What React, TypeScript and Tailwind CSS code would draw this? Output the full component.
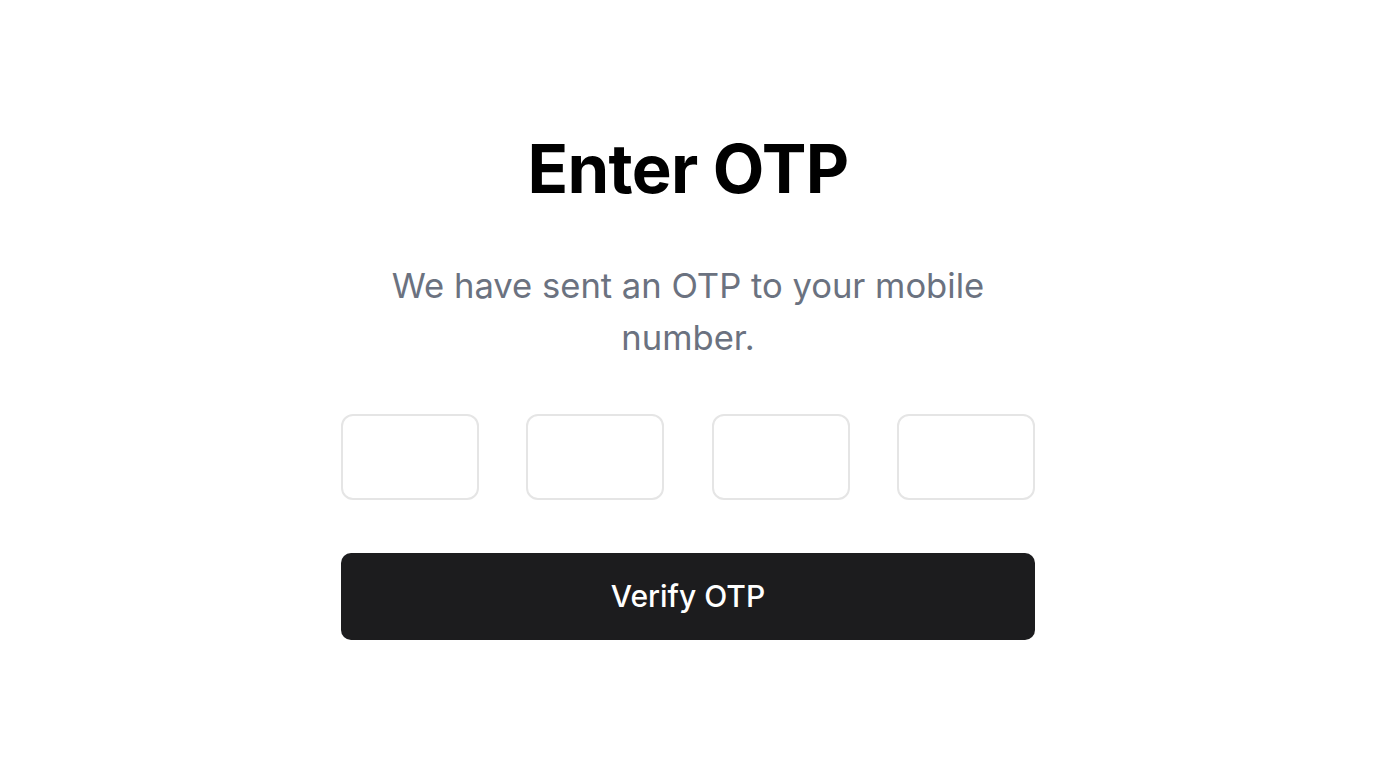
import { useState } from "react";

export default function App() {
  const [otp, setOtp] = useState<string[]>(["", "", "", ""]); // char per box

  const setDigit = (i: number, v: string) => {
    const next = [...otp];
    next[i] = v.slice(-1);
    setOtp(next);
  };

  return (
    <div
      className="min-h-screen bg-white flex flex-col items-center pt-[135px]"
      style={{ fontFamily: "Inter, 'Noto Sans', sans-serif" }}
    >
      <h1 className="text-[67px] leading-none font-bold text-black tracking-[-0.01em]">
        Enter OTP
      </h1>

      <p className="mt-[57px] w-[694px] text-center text-[34.6px] leading-[52px] text-[#6b7280]">
        We have sent an OTP to your mobile number.
      </p>

      {/* otp inputs */}
      <div className="mt-[51px] w-[694px] flex justify-between">
        {otp.map((d, i) => (
          <input
            key={i}
            type="text"
            inputMode="numeric"
            value={d}
            onChange={(e) => setDigit(i, e.target.value)}
            className="w-[138px] h-[86px] rounded-xl border-2 border-[#e5e5e5] text-center text-3xl focus:outline-none"
          />
        ))}
      </div>

      <button className="mt-[53px] w-[694px] h-[87px] rounded-[10px] bg-[#1c1c1e] text-white text-[30px] font-medium">
        Verify OTP
      </button>
    </div>
  );
}
